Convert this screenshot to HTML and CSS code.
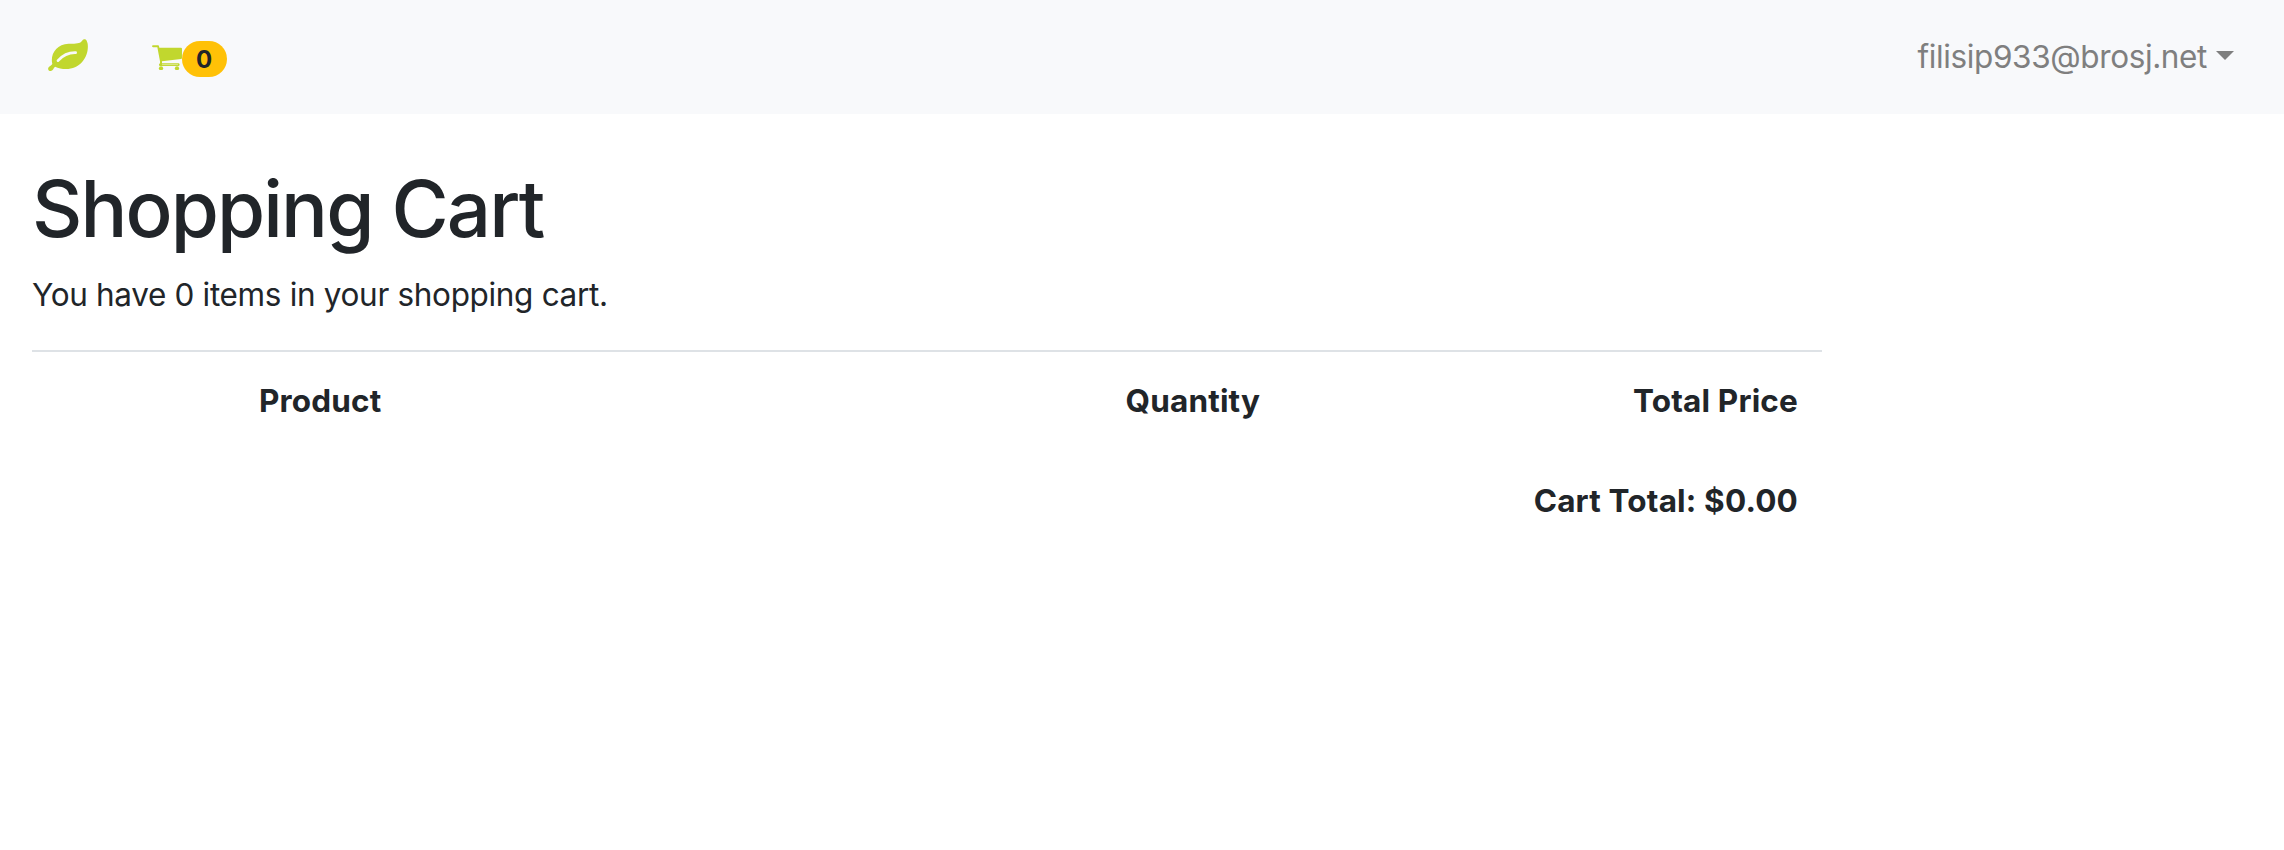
FILE: index.html
```html
<!DOCTYPE html>
<html lang="en">
<head>
<meta charset="utf-8">
<title>Shopping Cart</title>
<link rel="stylesheet" href="styles.css">
</head>
<body>
<nav class="navbar">
  <a class="brand" aria-label="Home"><svg class="leaf" viewBox="84 57 120 96"><path fill="#c1d72e" d="M192 58C198 56 201 62 203 71C208 108 182 147 138 147C126 147 115 145 105 140C100 145 99 152 92 153C86 153 83 148 85 143C87 139 94 137 97 132C90 103 108 73 146 71C173 72 181 69 186 63C188 60 190 59 192 58Z"/><path fill="none" stroke="#f8f9fb" stroke-width="8" stroke-linecap="round" d="M114 122Q136 97 167 98"/></svg></a>
  <a class="cart" aria-label="Cart"><svg class="trolley" viewBox="396 74 90 76"><path fill="#c1d72e" d="M399 75H414Q417 75 417 78L418 82H483Q486 82 486 85V113Q486 116 483 116L426 123V129H476Q479 130 479 133Q479 136 476 137H420Q417 137 417 134Q416 131 420 129V123L412 81H399Q396 80 396 78Q396 75 399 75Z"/><path stroke="#f8f9fb" stroke-width="1.5" d="M426 133H474"/><circle cx="423" cy="144" r="6.3" fill="#c1d72e"/><circle cx="471" cy="144" r="6.3" fill="#c1d72e"/></svg><span class="badge">0</span></a>
  <a class="account"><span class="email">filisip933@brosj.net</span><span class="caret"></span></a>
</nav>
<main class="content">
  <h1 class="title">Shopping Cart</h1>
  <p class="summary">You have 0 items in your shopping cart.</p>
  <div class="table">
    <div class="row">
      <span class="product">Product</span>
      <span class="quantity">Quantity</span>
      <span class="price">Total Price</span>
    </div>
    <div class="row total-row"><span class="total">Cart Total: $0.00</span></div>
  </div>
</main>
</body>
</html>
```
FILE: styles.css
```css
* { box-sizing: border-box; }
body { margin: 0; background: #fff; color: #212529; font-family: Inter, "Liberation Sans", sans-serif; font-size: 31.5px; line-height: 48px; }
.navbar { display: flex; align-items: flex-start; height: 114px; padding: 0 50px 0 48px; background: #f8f9fb; }
.leaf { display: block; width: 40px; height: 32px; margin-top: 39px; }
.cart { display: flex; align-items: flex-start; margin-left: 64px; }
.trolley { width: 30px; height: 25.3px; margin-top: 45px; }
.badge { width: 45px; height: 36px; margin-top: 41px; padding-right: 1px; border-radius: 20px; background: #ffc107; font-size: 24px; font-weight: 700; line-height: 37px; text-align: center; }
.account { display: flex; align-items: flex-start; margin-left: auto; color: #7f7f7f; }
.email { margin-top: 33px; letter-spacing: -0.38px; white-space: nowrap; }
.caret { margin: 51px 0 0 9px; border: 9px solid transparent; border-top-color: #7f7f7f; border-bottom: 0; }
.content { width: 1854px; padding: 47px 32px 0; }
.title { margin: 0; font-size: 78px; font-weight: 500; line-height: 96px; letter-spacing: -1.9px; white-space: nowrap; }
.summary { margin: 14px 0 0; letter-spacing: -0.33px; }
.table { margin-top: 31px; border-top: 2px solid #dee2e6; font-weight: 700; }
.row { display: flex; padding: 25px 24px 0 227px; height: 100px; letter-spacing: 0.17px; }
.quantity { margin-left: 744px; }
.price, .total { margin-left: auto; white-space: nowrap; }
```
